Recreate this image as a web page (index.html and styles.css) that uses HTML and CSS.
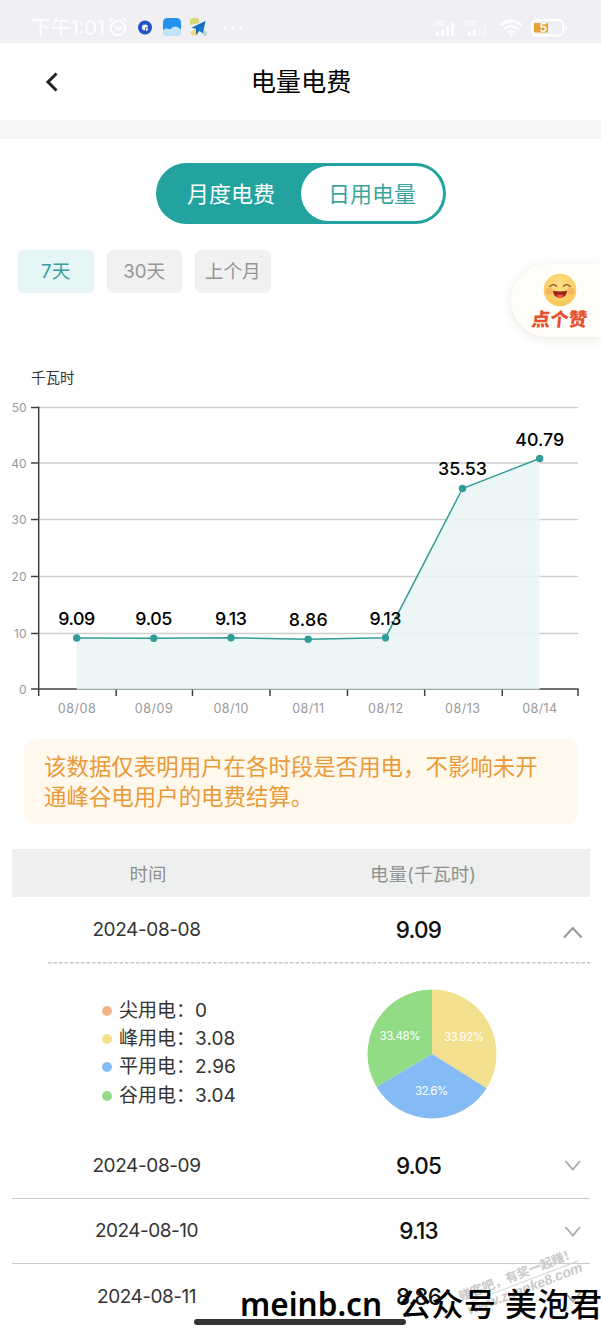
FILE: index.html
```html
<!DOCTYPE html>
<html lang="zh-CN">
<head>
    <meta charset="UTF-8">
    <meta name="viewport" content="width=device-width, initial-scale=1.0">
    <title>电量电费</title>
    <link rel="stylesheet" href="styles.css">
</head>
<body>
    <div class="page">
        <div class="statusBar">
            <svg width="601" height="43" viewBox="0 0 601 43">
                <text x="31" y="35" class="clock" textLength="74">下午1:01</text>
                <g class="statusLine">
                    <circle cx="118" cy="28" r="7.2"/>
                    <path d="M114.5 26.5l3.5 3 4-3M109 21.5l4-3M127 21.5l-4-3"/>
                </g>
                <circle cx="145" cy="27.5" r="5" fill="#fff" stroke="#2253c4" stroke-width="4"/>
                <path d="M145 27.500h4.500l-1 3.500-3.500 1z" fill="#2253c4"/>
                <path d="M145.500 28l1 3.500 2-2.500z" fill="#fff"/>
                <rect x="163" y="18" width="18" height="18" rx="4.5" fill="#2490f0"/>
                <path d="M163 30q4-2.5 7-.5 5-6 11 0v2q0 4.500-4.500 4.500h-9q-4.500 0-4.500-4.500z" fill="#c0e4f8"/>
                <path d="M190 20.500q0-2.500 2.500-2.500h6l1 5-9.500 2z" fill="#d9d77c"/>
                <path d="M190 33l5-4 3 4-2 2.500h-3.500z" fill="#f3d77d"/>
                <path d="M202 32l3.500-1 2 2.500-1.500 2.500h-2z" fill="#b9d9ce"/>
                <path d="M205.500 21l-14 6.500 4.500 1.500.500 5.500 3-3.500 3.500 2.500z" fill="#1777c9"/>
                <path d="M205 21.500l-8.500 8 .2 5" fill="none" stroke="#0b559f" stroke-width=".7"/>
                <g fill="#fff">
                    <circle cx="225" cy="27.500" r="1.200"/>
                    <circle cx="233" cy="27.500" r="1.200"/>
                    <circle cx="241" cy="27.500" r="1.200"/>
                    <text x="434" y="25.500" class="hd">HD</text>
                    <path d="M436 32h3v4h-3zM441 29h3v7h-3zM446 26h3v10h-3zM451 23h3v13h-3z"/>
                    <text x="465" y="25.500" class="hd">HD</text>
                    <path d="M468 32h3v4h-3zM473 29h3v7h-3z"/>
                    <path d="M478 26h3v10h-3zM483 23h3v13h-3z" opacity=".4"/>
                </g>
                <g class="wifi">
                    <path d="M500.500 25q10.500-8.500 21 0M504 29q7-5.500 14 0M507.500 32.500q3.500-2.500 7 0"/>
                </g>
                <circle cx="511" cy="35" r="1.500" fill="#fff"/>
                <rect x="532" y="20" width="31" height="15.500" rx="4.500" class="statusLine"/>
                <path d="M565.500 25v5.500" class="statusLine"/>
                <rect x="534" y="23" width="14" height="9.500" rx="1" fill="#e8a23c"/>
                <text x="539.500" y="32" class="battery">5</text>
            </svg>
        </div>

        <div class="navBar">
            <svg class="back" width="16" height="22" viewBox="0 0 16 22">
                <path d="M13.500 2.500L5 11l8.500 8.500"/>
            </svg>
            <h1>电量电费</h1>
        </div>

        <div class="content">
            <div class="switch">
                <span class="switchItem">月度电费</span>
                <span class="switchItem on">日用电量</span>
            </div>

            <div class="ranges">
                <span class="range active">7天</span>
                <span class="range">30天</span>
                <span class="range">上个月</span>
            </div>

            <svg class="chart" width="601" height="360" viewBox="0 360 601 360">
                <text x="31" y="382.500" class="unit">千瓦时</text>
                <g class="grid">
                    <path d="M38 407.500H578M38 463H578M38 519.500H578M38 576.500H578M38 633.500H578"/>
                </g>
                <g class="axis">
                    <path d="M38.700 406.500V696M31 689H578.500M31 407.500h8M31 463h8M31 519.500h8M31 576.500h8M31 633.500h8"/>
                    <path d="M116.200 689v7M192.500 689v7M270 689v7M347.500 689v7M424.700 689v7M502.300 689v7M578 689v7"/>
                </g>
                <g class="yLabels">
                    <text x="26.500" y="411.500">50</text>
                    <text x="26.500" y="467.500">40</text>
                    <text x="26.500" y="524">30</text>
                    <text x="26.500" y="581">20</text>
                    <text x="26.500" y="638">10</text>
                    <text x="26.500" y="694">0</text>
                </g>
                <path class="area" d="M76.700 638L153.800 638.200 231 637.700 308.200 639.200 385.500 637.700 462.500 488.500 539.700 458.500V689.500H76.700z"/>
                <path class="line" d="M76.700 638L153.800 638.200 231 637.700 308.200 639.200 385.500 637.700 462.500 488.500 539.700 458.500"/>
                <g class="dots">
                    <circle cx="76.700" cy="638" r="3.700"/>
                    <circle cx="153.800" cy="638.200" r="3.700"/>
                    <circle cx="231" cy="637.700" r="3.700"/>
                    <circle cx="308.200" cy="639.200" r="3.700"/>
                    <circle cx="385.500" cy="637.700" r="3.700"/>
                    <circle cx="462.500" cy="488.500" r="3.700"/>
                    <circle cx="539.700" cy="458.500" r="3.700"/>
                </g>
                <g class="values">
                    <text x="76.700" y="625" textLength="37">9.09</text>
                    <text x="153.800" y="625" textLength="37">9.05</text>
                    <text x="231" y="625" textLength="32">9.13</text>
                    <text x="308.200" y="626" textLength="39">8.86</text>
                    <text x="385.500" y="625" textLength="32">9.13</text>
                    <text x="462.500" y="475" textLength="49">35.53</text>
                    <text x="539.700" y="446" textLength="49">40.79</text>
                </g>
                <g class="xLabels">
                    <text x="76.700" y="712.500" textLength="38">08/08</text>
                    <text x="153.800" y="712.500" textLength="38">08/09</text>
                    <text x="231" y="712.500" textLength="35">08/10</text>
                    <text x="308.200" y="712.500" textLength="32">08/11</text>
                    <text x="385.500" y="712.500" textLength="35">08/12</text>
                    <text x="462.500" y="712.500" textLength="35">08/13</text>
                    <text x="539.700" y="712.500" textLength="35">08/14</text>
                </g>
            </svg>

            <div class="notice">该数据仅表明用户在各时段是否用电，不影响未开通峰谷电用户的电费结算。</div>

            <div class="table">
                <div class="row head">
                    <span>时间</span>
                    <span>电量(千瓦时)</span>
                </div>
                <div class="row first">
                    <span class="date">2024-08-08</span>
                    <span class="kwh">9.09</span>
                    <svg class="arrow big" width="22" height="16" viewBox="0 0 22 16"><path d="M2 13.500L10.800 4 19.600 13.500"/></svg>
                </div>
                <div class="detail">
                    <svg class="dash" width="542" height="2"><path d="M0 .800H542"/></svg>
                    <ul class="legend">
                        <li><i class="dot orange"></i>尖用电：<b>0</b></li>
                        <li><i class="dot yellow"></i>峰用电：<b>3.08</b></li>
                        <li><i class="dot blue"></i>平用电：<b>2.96</b></li>
                        <li><i class="dot green"></i>谷用电：<b>3.04</b></li>
                    </ul>
                    <svg class="pie" width="130" height="130" viewBox="-65 -65 130 130">
                        <path d="M0 0V-64.500A64.500 64.500 0 0 1 54.600 34.300z" fill="#f3e08f"/>
                        <path d="M0 0L54.600 34.300A64.500 64.500 0 0 1 -55.500 32.800z" fill="#85bbf5"/>
                        <path d="M0 0L-55.500 32.800A64.500 64.500 0 0 1 0 -64.500z" fill="#93dc86"/>
                        <text x="32" y="-13" textLength="40">33.92%</text>
                        <text x="-.500" y="41" textLength="33">32.6%</text>
                        <text x="-32" y="-14" textLength="41">33.48%</text>
                    </svg>
                </div>
                <div class="row">
                    <span class="date">2024-08-09</span>
                    <span class="kwh">9.05</span>
                    <svg class="arrow" width="22" height="16" viewBox="0 0 22 16"><path d="M3.500 4L10.800 12.500 18 4"/></svg>
                </div>
                <div class="row">
                    <span class="date d10">2024-08-10</span>
                    <span class="kwh d13">9.13</span>
                    <svg class="arrow" width="22" height="16" viewBox="0 0 22 16"><path d="M3.500 4L10.800 12.500 18 4"/></svg>
                </div>
                <div class="row last">
                    <span class="date d11">2024-08-11</span>
                    <span class="kwh">8.86</span>
                    <svg class="arrow" width="22" height="16" viewBox="0 0 22 16"><path d="M3.500 4L10.800 12.500 18 4"/></svg>
                </div>
            </div>
        </div>

        <div class="like">
            <svg width="34" height="34" viewBox="0 0 34 34">
                <defs>
                    <radialGradient id="face" cx=".5" cy=".35" r=".65">
                        <stop offset="0" stop-color="#ffe08a"/>
                        <stop offset="1" stop-color="#f8c556"/>
                    </radialGradient>
                </defs>
                <circle cx="17" cy="17" r="16.300" fill="url(#face)"/>
                <circle cx="6.500" cy="18" r="3.500" fill="#f69a55" opacity=".5"/>
                <circle cx="27.500" cy="18" r="3.500" fill="#f69a55" opacity=".5"/>
                <path d="M6.500 14q3.500-4.500 7.500-.500M20 13.500q4-4 7.500.500" fill="none" stroke="#8b5a2a" stroke-width="1.400"/>
                <path d="M10 17.800q7 1.500 14 0-.500 7-7 7t-7-7z" fill="#9b2318"/>
                <path d="M13 22.800q4-2.500 8 0-1.500 2-4 2t-4-2z" fill="#f0564a"/>
            </svg>
            <span>点个赞</span>
        </div>

        <div class="homeBar"></div>

        <svg class="marks" width="601" height="100" viewBox="0 1234 601 100">
            <g transform="translate(461 1301) rotate(-21)" class="stamp">
                <text x="0" y="0" textLength="124">赚客吧，有奖一起赚！</text>
                <path d="M8 4.500H124"/>
                <text x="3" y="16" class="url" textLength="122">www.zuanke8.com</text>
            </g>
            <g class="source">
                <text x="240" y="1316" textLength="142" lengthAdjust="spacingAndGlyphs">meinb.cn</text>
                <text x="399" y="1316" class="cjk" textLength="97">公众号</text>
                <text x="505" y="1316" class="cjk" textLength="97">美泡君</text>
            </g>
        </svg>
    </div>
</body>
</html>
```
FILE: styles.css
```css
* {
    box-sizing: border-box;
}

body {
    margin: 0;
    background-color: #fff;
    font-family: Inter, "Noto Sans CJK SC", sans-serif;
    color: #333;
}

.page {
    position: relative;
    width: 601px;
    height: 1334px;
    overflow: hidden;
}

svg {
    display: block;
}

.statusBar {
    height: 43px;
    background-color: #f0eff4;
}

.clock {
    fill: #fff;
    font-size: 20px;
}

.hd {
    font-size: 8px;
    font-weight: 600;
}

.battery {
    fill: #fff;
    font-size: 12px;
    font-weight: 600;
}

.statusLine,
.wifi {
    fill: none;
    stroke: #fff;
    stroke-width: 2;
}

.wifi {
    stroke-width: 2.6;
}

.navBar {
    display: grid;
    grid-template-columns: 1fr auto 1fr;
    align-items: center;
    height: 96px;
    border-bottom: 19px solid #f4f5f7;
}

.back {
    margin-left: 43px;
}

.back path {
    fill: none;
    stroke: #222;
    stroke-width: 3;
}

h1 {
    margin: 0;
    padding-left: 1px;
    font-size: 25.2px;
    font-weight: 400;
    line-height: 36px;
    color: #000;
}

.content {
    padding-top: 24px;
}

.switch {
    display: flex;
    width: 290px;
    height: 61px;
    margin-left: 156px;
    padding: 3px;
    border-radius: 31px;
    background-color: #23a3a0;
}

.switchItem {
    width: 142px;
    padding-left: 2px;
    border-radius: 28px;
    font-size: 22px;
    line-height: 56px;
    text-align: center;
    color: #fff;
}

.switchItem.on {
    padding-left: 0;
    background-color: #fff;
    color: #3ca5a0;
}

.ranges {
    display: flex;
    gap: 13px;
    margin: 26px 0 67px 18px;
}

.range {
    width: 75.5px;
    height: 43px;
    border-radius: 6px;
    background-color: #f1f1f1;
    font-size: 18.7px;
    line-height: 43px;
    text-align: center;
    color: #969696;
}

.range.active {
    background-color: #e6f5f5;
    color: #379f9b;
}

.unit {
    font-size: 14.5px;
    fill: #333;
}

.grid path {
    stroke: #cfcfcf;
    stroke-width: 1.3;
}

.axis path {
    fill: none;
    stroke: #404246;
    stroke-width: 1.5;
}

.yLabels,
.xLabels {
    font-size: 12.5px;
    fill: #999;
}

.yLabels {
    font-size: 12px;
    text-anchor: end;
}

.xLabels,
.values {
    text-anchor: middle;
}

.values {
    font-size: 17.8px;
    font-weight: 500;
    fill: #000;
}

.area {
    fill: #e9f4f6;
    fill-opacity: .85;
}

.line {
    fill: none;
    stroke: #359c98;
    stroke-width: 1.5;
}

.dots {
    fill: #319d99;
}

.notice {
    width: 554px;
    height: 85px;
    margin: 19px 0 25px 24px;
    padding: 13px 38px 0 20px;
    border-radius: 12px;
    background-color: #fff8ec;
    font-size: 22.45px;
    line-height: 29.5px;
    word-break: break-all;
    color: #e99a3a;
}

.table {
    width: 578px;
    margin-left: 12px;
}

.row {
    display: grid;
    grid-template-columns: 269px 275px 34px;
    align-items: center;
    height: 65.5px;
    border-bottom: 1px solid #cbcbcb;
    text-align: center;
}

.row.head {
    height: 48px;
    grid-template-columns: 272px 278px;
    border: none;
    background-color: #edf0ef;
    font-size: 18.5px;
    color: #919191;
}

.row.first {
    height: 65px;
    border: none;
}

.row.last {
    border: none;
}

.date {
    font-size: 19px;
    letter-spacing: -.4px;
}

.date.d10 {
    letter-spacing: -.5px;
}

.date.d11 {
    letter-spacing: -.5px;
}

.kwh {
    font-size: 22.5px;
    font-weight: 500;
    letter-spacing: -.8px;
    color: #111;
}

.kwh.d13 {
    letter-spacing: -.9px;
}

.row.first .kwh {
    padding-bottom: 1px;
}

.arrow {
    margin-left: 6px;
}

.arrow path {
    fill: none;
    stroke: #aaa;
    stroke-width: 1.8;
}

.arrow.big {
    margin-top: 5px;
}

.arrow.big path {
    stroke: #999;
    stroke-width: 2.1;
}

.detail {
    display: grid;
    grid-template-columns: 355px 1fr;
    grid-template-rows: 2px 1fr;
    height: 171px;
}

.dash {
    grid-column: 1 / 3;
    margin-left: 36px;
}

.dash path {
    stroke: #c6c6c6;
    stroke-width: 1.4;
    stroke-dasharray: 3.5 2;
}

.legend {
    margin: 33px 0 0 90px;
    padding: 0;
    list-style: none;
    font-size: 19px;
    line-height: 28.2px;
}

.legend li {
    display: flex;
    align-items: center;
    height: 28.2px;
}

.legend b {
    font-weight: 400;
    letter-spacing: .1px;
}

.dot {
    width: 10px;
    height: 10px;
    margin-right: 7px;
    border-radius: 50%;
}

.orange {
    background-color: #f2b58c;
}

.yellow {
    background-color: #f3e08f;
}

.blue {
    background-color: #85bbf5;
}

.green {
    background-color: #93dc86;
}

.pie {
    margin-top: 25px;
}

.pie text {
    fill: #fff;
    font-size: 11.5px;
    text-anchor: middle;
}

.like {
    position: absolute;
    top: 264px;
    right: 0;
    width: 90px;
    height: 73px;
    padding: 9px 0 0 7px;
    border-radius: 37px 0 0 37px;
    background-color: #fffdf8;
    box-shadow: 0 2px 10px rgba(90, 60, 20, .12);
    text-align: center;
}

.like svg {
    margin: 0 auto;
}

.like span {
    display: block;
    font-size: 18.5px;
    font-weight: 900;
    line-height: 24px;
    color: #e5512e;
    transform: skewX(-6deg);
}

.homeBar {
    position: absolute;
    left: 194px;
    top: 1319px;
    width: 212px;
    height: 6px;
    border-radius: 3px;
    background-color: #333;
}

.marks {
    position: absolute;
    left: 0;
    top: 1234px;
}

.stamp {
    fill: #c9c9c9;
    font-size: 12.5px;
    font-weight: 700;
}

.stamp path {
    stroke: #d2d2d2;
}

.stamp .url {
    font-family: "Liberation Sans", sans-serif;
    font-size: 14px;
    font-style: italic;
}

.source {
    fill: #000;
    font-family: "Noto Sans", sans-serif;
    font-size: 33px;
    font-weight: 600;
}

.source .cjk {
    font-family: "Noto Sans CJK SC", sans-serif;
    font-size: 32px;
    font-weight: 500;
}
```
